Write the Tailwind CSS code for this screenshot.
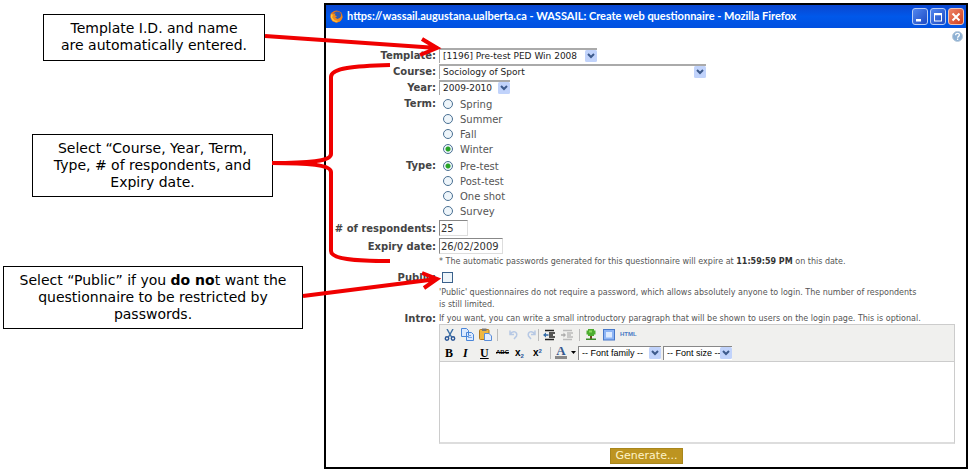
<!DOCTYPE html>
<html lang="en">
<head>
<meta charset="utf-8">
<title>WASSAIL: Create web questionnaire</title>
<script src="https://cdn.jsdelivr.net/npm/@tailwindcss/browser@4"></script>
</head>
<body class="relative flex min-h-screen bg-white font-['DejaVu_Sans',sans-serif] text-black">

<aside class="flex w-[324px] shrink-0 flex-col items-start pt-[14px] text-center text-[14px] leading-[17px]">
  <p class="ml-[43px] w-[222px] border border-black px-2 pt-[5px] pb-[6px]">Template I.D. and name<br>are automatically entered.</p>
  <p class="mt-[73px] ml-[32px] w-[241px] border border-black px-2 py-[5px]">Select “Course, Year, Term,<br>Type, # of respondents, and<br>Expiry date.</p>
  <p class="mt-[69px] ml-[3px] w-[300px] border border-black px-1 py-[5px]">Select “Public” if you <b>do no</b>t want the<br>questionnaire to be restricted by<br>passwords.</p>
</aside>

<main class="mt-[3px] mr-[2px] mb-[2px] flex flex-1 flex-col border-2 border-black bg-white">
  <header class="flex h-[23px] items-center gap-1 bg-linear-to-b from-[#0a46cf] via-[#0058ea] to-[#0050e0] px-1">
    <svg class="size-[13px] shrink-0" viewBox="0 0 14 14" aria-hidden="true">
      <circle cx="7" cy="7" r="6.5" fill="#e8741c"/>
      <circle cx="7.8" cy="5.8" r="4.2" fill="#2c5bb8"/>
      <path d="M.8 3.5 3.5 4.4 6 3.6 5.2 5.6 7.6 6.6 5.6 8.2 8 9.8 11 8.4 12.6 5 13.4 8 11 12.2 7 13.6 2.6 12 .6 8Z" fill="#f08a1d"/>
      <path d="M1 4.5 3 5.2 2.4 8.2 5 11.2 9 11.8 6.4 12.8 2.8 11.2 1 8Z" fill="#ffc845"/>
    </svg>
    <h1 class="flex-1 font-['Lato',sans-serif] text-[11px] font-bold whitespace-nowrap text-white">https://wassail.augustana.ualberta.ca - WASSAIL: Create web questionnaire - Mozilla Firefox</h1>
    <div class="-mr-[2px] flex gap-[2px]">
      <button aria-label="Minimize" class="flex h-[17px] w-4 items-center justify-center rounded-[3px] border border-[#b9cdf5] bg-linear-to-br from-[#5286ee] to-[#1d49c4]">
        <svg class="size-[14px]" viewBox="0 0 14 14"><path d="M3 9h5v2.5H3z" fill="#fff"/></svg></button>
      <button aria-label="Maximize" class="flex h-[17px] w-4 items-center justify-center rounded-[3px] border border-[#b9cdf5] bg-linear-to-br from-[#5286ee] to-[#1d49c4]">
        <svg class="size-[14px]" viewBox="0 0 14 14"><path d="M3 3h8v8.5H3zM4 5.200v5.300h6V5.200z" fill="#fff" fill-rule="evenodd"/></svg></button>
      <button aria-label="Close" class="flex h-[17px] w-4 items-center justify-center rounded-[3px] border border-[#f0c4b4] bg-linear-to-br from-[#ee8468] to-[#cf3a14]">
        <svg class="size-[14px]" viewBox="0 0 14 14"><path d="m3.500 3.500 7 7m0-7-7 7" stroke="#fff" stroke-width="2"/></svg></button>
    </div>
  </header>

  <div class="flex h-[19px] justify-end px-[3px] pt-[3px]">
    <a href="#help" aria-label="Help">
      <svg class="size-[11px]" viewBox="0 0 11 11"><circle cx="5.500" cy="5.500" r="5" fill="#8db0d3" stroke="#b9cbdc"/><path d="M3.600 4.300c0-2.600 3.900-2.400 3.800-.2 0 1.300-1.800 1.200-1.800 2.600M5.600 7.600v1.300" fill="none" stroke="#fff" stroke-width="1.300"/></svg>
    </a>
  </div>

  <form class="flex flex-col pr-[11px] text-[10px] text-[#555]">
    <div class="grid h-4 grid-cols-[110px_1fr] items-center gap-x-[3px]">
      <label for="template" class="text-right font-bold text-[#444]">Template:</label>
      <div class="relative w-[158px]">
        <select id="template" class="block h-[15px] w-full appearance-none border-t-2 border-l border-[#aaa] bg-white pl-[3px] text-[9px] leading-[12px] text-[#222]"><option>[1196] Pre-test PED Win 2008</option></select>
        <svg class="pointer-events-none absolute top-[2px] right-0 size-3" viewBox="0 0 12 12"><rect width="12" height="12" rx="1.500" fill="#c1d3fb"/><path d="m3 4 3 3 3-3" fill="none" stroke="#3d5a8c" stroke-width="2"/></svg>
      </div>
    </div>
    <div class="grid h-4 grid-cols-[110px_1fr] items-center gap-x-[3px]">
      <label for="course" class="text-right font-bold text-[#444]">Course:</label>
      <div class="relative w-[267px]">
        <select id="course" class="block h-[15px] w-full appearance-none border-t-2 border-l border-[#aaa] bg-white pl-[3px] text-[9px] leading-[12px] text-[#222]"><option>Sociology of Sport</option></select>
        <svg class="pointer-events-none absolute top-[2px] right-0 size-3" viewBox="0 0 12 12"><rect width="12" height="12" rx="1.500" fill="#c1d3fb"/><path d="m3 4 3 3 3-3" fill="none" stroke="#3d5a8c" stroke-width="2"/></svg>
      </div>
    </div>
    <div class="grid h-4 grid-cols-[110px_1fr] items-center gap-x-[3px]">
      <label for="year" class="text-right font-bold text-[#444]">Year:</label>
      <div class="relative w-[71px]">
        <select id="year" class="block h-[15px] w-full appearance-none border-t-2 border-l border-[#aaa] bg-white pl-[3px] text-[9px] leading-[12px] text-[#222]"><option>2009-2010</option></select>
        <svg class="pointer-events-none absolute top-[2px] right-0 size-3" viewBox="0 0 12 12"><rect width="12" height="12" rx="1.500" fill="#c1d3fb"/><path d="m3 4 3 3 3-3" fill="none" stroke="#3d5a8c" stroke-width="2"/></svg>
      </div>
    </div>

    <fieldset class="grid grid-cols-[110px_1fr] gap-x-[3px] pt-[2px]" aria-labelledby="term">
      <span id="term" class="text-right leading-[14px] font-bold text-[#444]">Term:</span>
      <div class="flex flex-col pl-1">
        <label class="flex h-[15px] items-center gap-[7px]"><input type="radio" name="term" class="mb-[2px] size-[10px] appearance-none rounded-full border border-[#4a7093] bg-[#eef5fa]">Spring</label>
        <label class="flex h-[15px] items-center gap-[7px]"><input type="radio" name="term" class="mb-[2px] size-[10px] appearance-none rounded-full border border-[#4a7093] bg-[#eef5fa]">Summer</label>
        <label class="flex h-[15px] items-center gap-[7px]"><input type="radio" name="term" class="mb-[2px] size-[10px] appearance-none rounded-full border border-[#4a7093] bg-[#eef5fa]">Fall</label>
        <label class="flex h-[15px] items-center gap-[7px]"><input type="radio" name="term" checked class="mb-[2px] size-[10px] appearance-none rounded-full border border-[#4a7093] bg-[radial-gradient(circle,#27a327_2px,#eef5fa_3px)]">Winter</label>
      </div>
    </fieldset>
    <fieldset class="grid grid-cols-[110px_1fr] gap-x-[3px] pt-[2px]" aria-labelledby="type">
      <span id="type" class="text-right leading-[14px] font-bold text-[#444]">Type:</span>
      <div class="flex flex-col pl-1">
        <label class="flex h-[15px] items-center gap-[7px]"><input type="radio" name="type" checked class="mb-[2px] size-[10px] appearance-none rounded-full border border-[#4a7093] bg-[radial-gradient(circle,#27a327_2px,#eef5fa_3px)]">Pre-test</label>
        <label class="flex h-[15px] items-center gap-[7px]"><input type="radio" name="type" class="mb-[2px] size-[10px] appearance-none rounded-full border border-[#4a7093] bg-[#eef5fa]">Post-test</label>
        <label class="flex h-[15px] items-center gap-[7px]"><input type="radio" name="type" class="mb-[2px] size-[10px] appearance-none rounded-full border border-[#4a7093] bg-[#eef5fa]">One shot</label>
        <label class="flex h-[15px] items-center gap-[7px]"><input type="radio" name="type" class="mb-[2px] size-[10px] appearance-none rounded-full border border-[#4a7093] bg-[#eef5fa]">Survey</label>
      </div>
    </fieldset>

    <div class="grid h-[18px] grid-cols-[110px_1fr] items-center gap-x-[3px]">
      <label for="resp" class="text-right font-bold whitespace-nowrap text-[#444]"># of respondents:</label>
      <input id="resp" value="25" class="h-4 w-[29px] border border-[#ddd] border-t-[#888] border-l-[#888] pl-px text-[10px] text-[#333]">
    </div>
    <div class="grid h-[18px] grid-cols-[110px_1fr] items-center gap-x-[3px]">
      <label for="expiry" class="text-right font-bold text-[#444]">Expiry date:</label>
      <input id="expiry" value="26/02/2009" class="h-4 w-[64px] border border-[#ddd] border-t-[#888] border-l-[#888] pl-px text-[10px] text-[#333]">
    </div>
    <p class="ml-[113px] text-[8px] leading-[14px] whitespace-nowrap">* The automatic passwords generated for this questionnaire will expire at <b class="text-[#333]">11:59:59 PM</b> on this date.</p>
    <div class="grid h-4 grid-cols-[110px_1fr] items-center gap-x-[3px]">
      <label for="public" class="text-right font-bold text-[#444]">Public:</label>
      <input id="public" type="checkbox" class="ml-[3px] size-[11px] appearance-none border border-[#3a618c] bg-[#eef5fa]">
    </div>
    <p class="ml-[113px] pt-[2px] text-[8px] leading-[12px]">'Public' questionnaires do not require a password, which allows absolutely anyone to login. The number of respondents<br>is still limited.</p>
    <div class="grid h-[13px] grid-cols-[110px_1fr] items-center gap-x-[3px]">
      <label for="intro" class="text-right font-bold text-[#444]">Intro:</label>
      <span class="text-[8px] whitespace-nowrap">If you want, you can write a small introductory paragraph that will be shown to users on the login page. This is optional.</span>
    </div>

    <div class="ml-[113px] border border-[#ccc] border-b-2 border-b-[#ddd]">
      <div class="flex h-[37px] flex-col border-b border-[#ccc] bg-[#f0f0ee] px-[3px] text-black">
        <div class="flex h-[19px] items-center">
          <button type="button" aria-label="Cut" class="flex w-[18px] pl-px"><svg class="size-3" viewBox="0 0 12 12"><path d="m3 0 4.500 8M9 0 4.500 8" stroke="#3a6ea5" stroke-width="1.400"/><circle cx="3" cy="9.500" r="1.700" fill="none" stroke="#2b5797" stroke-width="1.400"/><circle cx="9" cy="9.500" r="1.700" fill="none" stroke="#2b5797" stroke-width="1.400"/></svg></button>
          <button type="button" aria-label="Copy" class="w-[18px]"><svg class="size-[13px]" viewBox="0 0 13 13"><path d="M.5.500h5l2 2v6h-7zM5.500 4.500h5l2 2v6h-7z" fill="#dbe9ff" stroke="#4a86d8"/><path d="M7 7.500h3M7 9.500h4" stroke="#7ba7e4"/></svg></button>
          <button type="button" aria-label="Paste" class="w-[17px]"><svg class="size-[13px]" viewBox="0 0 13 13"><rect x=".5" y="1.500" width="9.500" height="10" rx="1" fill="#f0b73f" stroke="#b37a1c"/><path d="M3 .5h4.500v2.500H3z" fill="#777"/><path d="M5.500 5.500h4.500l2.500 2.500v4.500h-7z" fill="#e4eeff" stroke="#5a8cd6"/></svg></button>
          <span class="mr-1 ml-px h-3 w-px bg-[#bbb]"></span>
          <button type="button" aria-label="Undo" disabled class="ml-[6px] w-[18px]"><svg class="size-[11px]" viewBox="0 0 11 11"><path d="M2 1.500v4h4M2 5.500c3-5 8-2.500 6.500 1.500L6 10" fill="none" stroke="#b6c8e4" stroke-width="1.500"/></svg></button>
          <button type="button" aria-label="Redo" disabled class="w-[11px]"><svg class="size-[11px]" viewBox="0 0 11 11"><path d="M9 1.500v4H5M9 5.500C6 .5 1 3 2.500 7L5 10" fill="none" stroke="#b6c8e4" stroke-width="1.500"/></svg></button>
          <span class="mr-1 ml-px h-3 w-px bg-[#bbb]"></span>
          <button type="button" aria-label="Outdent" class="w-[18px]"><svg class="size-3" viewBox="0 0 12 12"><path d="M2 1.500h9M6 4h6M6 6h4M6 8h6M2 10.500h9" stroke="#222" stroke-width="1.400"/><path d="m0 6 3-2.600v1.800h2.500v1.600H3v1.800z" fill="#336ba8"/></svg></button>
          <button type="button" aria-label="Indent" disabled class="w-[14px]"><svg class="size-3" viewBox="0 0 12 12"><path d="M2 1.500h9M6 4h6M6 6h4M6 8h6M2 10.500h9" stroke="#bbb" stroke-width="1.400"/><path d="M5 6 2.500 3.400v1.800H0v1.600h2.500v1.800z" fill="#aaa"/></svg></button>
          <span class="mx-1 h-3 w-px bg-[#bbb]"></span>
          <button type="button" aria-label="Insert image" class="ml-px w-[18px]"><svg class="size-3" viewBox="0 0 12 12"><path d="M5 6h2v4H5z" fill="#6b4a1c"/><path d="M1 9.500h10V11H1z" fill="#3d8a2c"/><path d="M3 0h6v1.500h1.500v4H9V7H3V5.500H1.500v-4H3z" fill="#4cad2f"/><path d="M4 1.500h3v2H4z" fill="#8ad95d"/></svg></button>
          <button type="button" aria-label="Full screen" class="w-[17px]"><svg class="size-3" viewBox="0 0 12 12"><rect x=".5" y=".5" width="11" height="10.500" fill="#8db5f5" stroke="#4677c8"/><path d="M3 3h6v5.500H3z" fill="#dceaff"/></svg></button>
          <button type="button" class="font-['Liberation_Sans',sans-serif] text-[6px] font-bold text-[#4a7ac4]">HTML</button>
        </div>
        <div class="flex h-[17px] items-center font-['Liberation_Serif',serif] text-[12px] font-bold">
          <button type="button" aria-label="Bold" class="w-[18px] pl-[2px] text-left">B</button>
          <button type="button" aria-label="Italic" class="w-[18px] pl-[2px] text-left italic">I</button>
          <button type="button" aria-label="Underline" class="w-[17px] pl-px text-left underline">U</button>
          <button type="button" aria-label="Strikethrough" class="w-[18px] text-left font-['Liberation_Sans',sans-serif] text-[6px] line-through">ABC</button>
          <button type="button" aria-label="Subscript" class="w-[18px] pl-px text-left font-['Liberation_Sans',sans-serif] text-[10px]">x<sub class="text-[6px] text-[#2b5797]">2</sub></button>
          <button type="button" aria-label="Superscript" class="w-[18px] pl-px text-left font-['Liberation_Sans',sans-serif] text-[10px]">x<sup class="text-[6px] text-[#2b5797]">2</sup></button>
          <span class="mr-1 h-3 w-px bg-[#bbb]"></span>
          <button type="button" aria-label="Text colour" class="flex items-center gap-1"><span class="w-3 border-b-[3px] border-[#888] text-center text-[13px] leading-[10px] text-[#36588f]">A</span><svg class="h-[3px] w-[5px]" viewBox="0 0 5 3"><path d="M0 0h5L2.500 3z"/></svg></button>
          <div class="relative ml-[2px] w-[83px]">
            <select aria-label="Font family" class="block h-[14px] w-full appearance-none border-t border-l border-[#888] bg-white pl-[3px] font-['Liberation_Sans',sans-serif] text-[9px] leading-[12px] font-normal"><option>-- Font family --</option></select>
            <svg class="pointer-events-none absolute top-px right-0 size-3" viewBox="0 0 12 12"><rect width="12" height="12" rx="1.500" fill="#c1d3fb"/><path d="m3 4 3 3 3-3" fill="none" stroke="#3d5a8c" stroke-width="2"/></svg>
          </div>
          <div class="relative ml-[2px] w-[69px]">
            <select aria-label="Font size" class="block h-[14px] w-full appearance-none border-t border-l border-[#888] bg-white pl-[3px] font-['Liberation_Sans',sans-serif] text-[9px] leading-[12px] font-normal"><option>-- Font size --</option></select>
            <svg class="pointer-events-none absolute top-px right-0 size-3" viewBox="0 0 12 12"><rect width="12" height="12" rx="1.500" fill="#c1d3fb"/><path d="m3 4 3 3 3-3" fill="none" stroke="#3d5a8c" stroke-width="2"/></svg>
          </div>
        </div>
      </div>
      <textarea id="intro" class="block h-[80px] w-full resize-none bg-white p-1 outline-none"></textarea>
    </div>
    <button type="submit" class="mt-1 ml-[284px] h-4 w-[73px] border border-[#a8861c] bg-[#bd9420] text-[11px] leading-[12px] text-[#fdf3c8]">Generate...</button>
  </form>
</main>

<svg class="pointer-events-none absolute top-0 left-0 h-[471px] w-[970px]" viewBox="0 0 970 471" fill="none" stroke="#f00000" stroke-width="4" aria-hidden="true">
  <path d="M265 36 437 48M422 39l15 9-17 7"/>
  <path d="M390 65c-36 1-59 3-59 12v77c0 7-20 9-59 9 39 0 59 2 59 9v79c0 8 23 10 59 10"/>
  <path d="M303 296 437 279M422 273l15 6-13 9"/>
</svg>
</body>
</html>
